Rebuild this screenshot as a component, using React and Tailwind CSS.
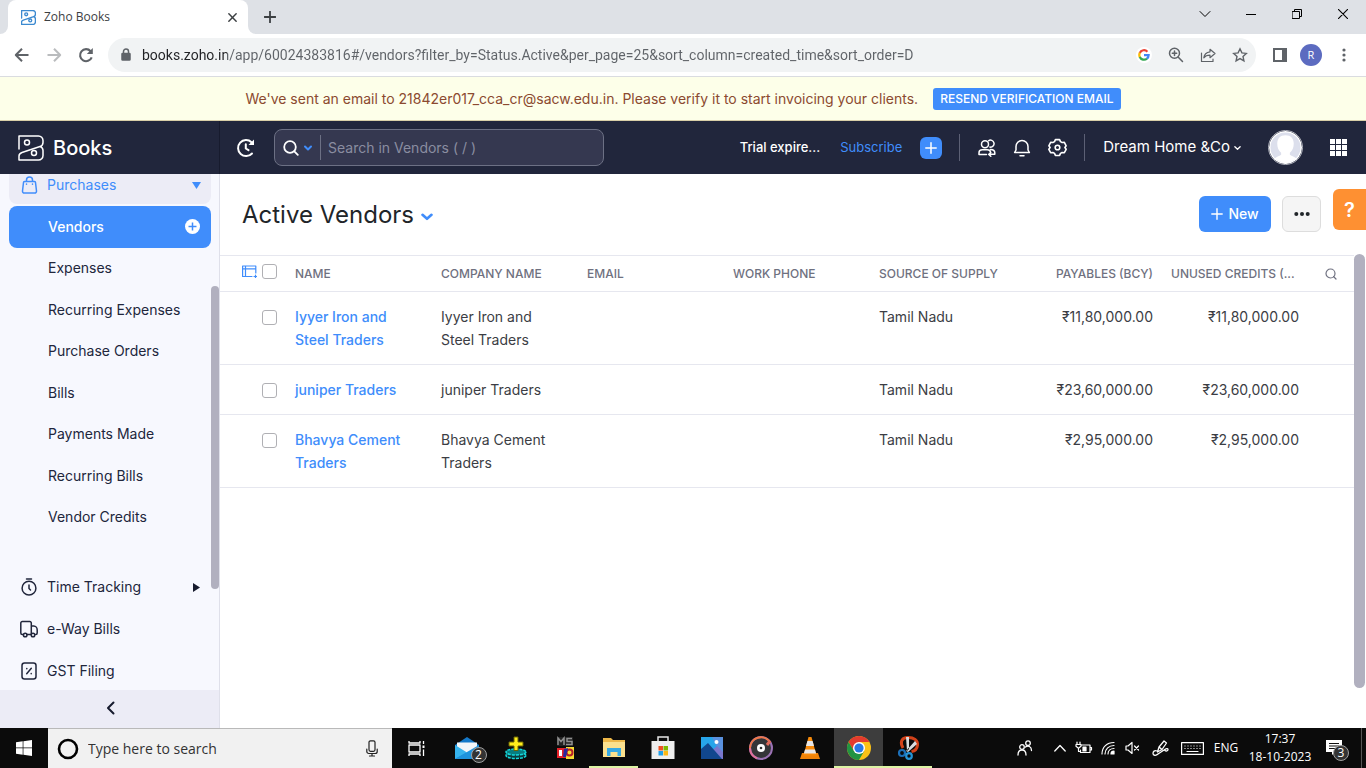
import React from "react";

const UI = "font-['Open_Sans','Noto_Sans',sans-serif]";

function Svg({ s = 24, w, h, sw = 2, className = "", children, vb }) {
  return (
    <svg
      aria-hidden="true"
      width={w || s}
      height={h || s}
      viewBox={vb || "0 0 24 24"}
      fill="none"
      stroke="currentColor"
      strokeWidth={sw}
      strokeLinecap="round"
      strokeLinejoin="round"
      className={"shrink-0 " + className}
    >
      {children}
    </svg>
  );
}

function BooksLogo({ s, sw, className }) {
  return (
    <Svg s={s} sw={sw} vb="0 0 26 26" className={className}>
      <path d="M1 14V1h19.500a4.500 4.500 0 0 1 4.500 4.500v2c0 2-1 3.300-3 4L4 17.500c-2 .7-3 2-3 3.500v4h19.500a4.500 4.500 0 0 0 4.500-4.500v-5c0-1.800-1-3.200-2.800-4" />
      <circle cx="9" cy="7.500" r="2.500" />
      <circle cx="16" cy="18" r="2.500" />
    </Svg>
  );
}

function IconButton({ label, className = "", children }) {
  return (
    <button type="button" aria-label={label} className={"flex shrink-0 items-center justify-center " + className}>
      {children}
    </button>
  );
}

function TabStrip() {
  return (
    <div className={"flex h-[34px] shrink-0 items-stretch bg-[#dee1e6] " + UI}>
      <div className="w-2 bg-white">
        <div className="h-full rounded-br-lg bg-[#dee1e6]" />
      </div>
      <div className="flex w-60 items-center rounded-t-lg bg-white pl-[13px] pr-2">
        <BooksLogo s={15} sw={2.4} className="text-[#3c8ad0]" />
        <span className="ml-2 flex-1 text-xs text-[#3c4043]">Zoho Books</span>
        <IconButton label="Close tab" className="size-4 text-[#3c4043]">
          <Svg s={11} sw={3.2}><path d="M4 4l16 16M20 4L4 20" /></Svg>
        </IconButton>
      </div>
      <div className="w-2 bg-white">
        <div className="h-full rounded-bl-lg bg-[#dee1e6]" />
      </div>
      <IconButton label="New tab" className="w-7 text-[#3c4043]">
        <Svg s={12} sw={3.6} vb="0 0 24 24"><path d="M12 1v22M1 12h22" /></Svg>
      </IconButton>
      <div className="ml-auto flex h-7 text-black">
        <IconButton label="Search tabs" className="w-[46px]">
          <Svg s={12} sw={1} vb="0 0 12 12"><path d="M1 3.500l5 5 5-5" /></Svg>
        </IconButton>
        <IconButton label="Minimise" className="w-[46px]">
          <Svg s={10} sw={1} vb="0 0 10 10"><path d="M0 5.500h10" /></Svg>
        </IconButton>
        <IconButton label="Restore" className="w-[46px]">
          <Svg s={10} sw={1} vb="0 0 10 10"><path d="M.5 2.500h7v7h-7zM2.500 2.500v-2h7v7h-2" /></Svg>
        </IconButton>
        <IconButton label="Close" className="w-[46px]">
          <Svg s={10} sw={1.100} vb="0 0 10 10"><path d="M0 0l10 10M10 0L0 10" /></Svg>
        </IconButton>
      </div>
    </div>
  );
}

function Toolbar() {
  return (
    <div className={"flex h-[43px] shrink-0 items-center border-b border-[#dadce0] bg-white text-[#5f6368] " + UI}>
      <IconButton label="Back" className="ml-3 w-5">
        <Svg s={16} sw={2} vb="0 0 16 16"><path d="M14.500 8H2M8 1.800L1.800 8 8 14.200" strokeLinecap="butt" /></Svg>
      </IconButton>
      <IconButton label="Forward" className="ml-3 w-5 text-[#babcbe]">
        <Svg s={16} sw={2} vb="0 0 16 16"><path d="M1.500 8H14M8 1.800L14.200 8 8 14.200" strokeLinecap="butt" /></Svg>
      </IconButton>
      <IconButton label="Reload" className="ml-3 w-5">
        <Svg s={16} sw={2.100} vb="0 0 16 16">
          <path d="M13.700 10.300A6 6 0 1 1 12.600 4.200" strokeLinecap="butt" />
          <path d="M14.800 1v6h-6z" fill="currentColor" stroke="none" />
        </Svg>
      </IconButton>
      <div className="ml-3 flex h-[34px] min-w-0 flex-1 items-center rounded-full bg-[#f1f3f4] pl-3">
        <Svg s={12} sw={1.500} vb="0 0 12 14" h={14} className="text-[#5f6368]">
          <path d="M3.500 6V3.500a2.500 2.500 0 0 1 5 0V6" />
          <rect x="2" y="5.500" width="8" height="6.500" rx=".6" fill="currentColor" />
        </Svg>
        <input
          aria-label="Address"
          readOnly
          value="books.zoho.in/app/60024383816#/vendors?filter_by=Status.Active&per_page=25&sort_column=created_time&sort_order=D"
          className="ml-2.5 min-w-0 flex-1 bg-[linear-gradient(to_right,#202124_85px,#5f6368_85px)] bg-clip-text font-['Roboto',sans-serif] text-sm text-transparent outline-none"
        />
        <div className="flex items-center">
          <IconButton label="Google" className="size-8">
            <span className="flex size-4 items-center justify-center rounded-full bg-white">
              <Svg s={12} sw={4.500} vb="0 0 24 24">
                <g strokeLinecap="butt" strokeLinejoin="miter">
                  <path d="M3.500 8A9.300 9.300 0 0 1 18.800 5.300" stroke="#ea4335" />
                  <path d="M3.700 16.300a9.300 9.300 0 0 1 0-8.600" stroke="#fbbc05" />
                  <path d="M18 19.200A9.300 9.300 0 0 1 3.500 16" stroke="#34a853" />
                  <path d="M12 12h9.300c0 3-1.300 5.500-3.500 7.300" stroke="#4285f4" />
                </g>
              </Svg>
            </span>
          </IconButton>
          <IconButton label="Zoom" className="size-8">
            <Svg s={16} sw={1.500} vb="0 0 16 16"><circle cx="6.500" cy="6.300" r="5" /><path d="M10.300 10.200l4.200 4.300M4.300 6.300h4.400M6.500 4.100v4.400" /></Svg>
          </IconButton>
          <IconButton label="Share" className="size-8">
            <Svg s={16} sw={1.200} vb="0 0 16 16"><path d="M1.500 6v8.500h11.500v-2.500" /><path d="M10 2.300l5 4.200-5 4.200V8.200c-3 0-4.800.8-6.200 2.600.4-3.300 2.500-5.600 6.200-6z" /></Svg>
          </IconButton>
          <IconButton label="Bookmark" className="size-8">
            <Svg s={16} sw={1.400} vb="0 0 16 16"><path d="M8 1.800l1.900 4.100 4.400.5-3.300 3 .9 4.400L8 11.600l-3.900 2.200.9-4.400-3.300-3 4.400-.5z" strokeLinejoin="miter" /></Svg>
          </IconButton>
        </div>
      </div>
      <IconButton label="Side panel" className="ml-4 w-4">
        <svg width="14" height="14" viewBox="0 0 14 14" aria-hidden="true"><path fill="#5f6368" fillRule="evenodd" d="M0 0h14v14H0zM2 2v10h7V2z" /></svg>
      </IconButton>
      <button type="button" aria-label="Profile" className="ml-3 flex size-[22px] items-center justify-center rounded-full bg-[#5c6bc0] text-[11px] text-white">R</button>
      <IconButton label="Menu" className="mx-3 w-5">
        <svg width="4" height="14" viewBox="0 0 4 14" fill="#5f6368" aria-hidden="true"><circle cx="2" cy="2" r="1.600" /><circle cx="2" cy="7" r="1.600" /><circle cx="2" cy="12" r="1.600" /></svg>
      </IconButton>
    </div>
  );
}

function Banner() {
  return (
    <div className="flex h-11 shrink-0 items-center justify-center gap-[15px] border-b border-[#d8cfa8] bg-[#fdffe9] text-[#8b4a30]">
      <p className="text-sm">We've sent an email to 21842er017_cca_cr@sacw.edu.in. Please verify it to start invoicing your clients.</p>
      <button type="button" className="h-[22px] rounded-[3px] bg-[#408dfb] px-[7px] text-xs font-medium text-white">RESEND VERIFICATION EMAIL</button>
    </div>
  );
}

function AppHeader() {
  return (
    <header className="flex h-[53px] shrink-0 items-center bg-[#21263c] text-white">
      <a href="#home" className="flex h-full w-[220px] shrink-0 items-center border-r border-[#171b2e] pl-[18px]">
        <BooksLogo s={26} sw={1.500} className="text-white" />
        <span className="ml-[9px] text-xl font-medium">Books</span>
      </a>
      <IconButton label="Recent activity" className="ml-4 w-5">
        <Svg s={20} sw={2} vb="0 0 20 20">
          <path d="M16 15.500A8 8 0 1 1 15.500 4.200" />
          <path d="M18 1.500v5.500h-5.500z" fill="currentColor" stroke="none" />
          <path d="M9.800 6.300v4.200l2.700 1.700" />
        </Svg>
      </IconButton>
      <div className="ml-[18px] flex h-[37px] w-[330px] items-center rounded-lg border border-[#6c7084] bg-[#353850] pl-2">
        <Svg s={16} sw={1.800} vb="0 0 16 16"><circle cx="7" cy="7" r="5.800" /><path d="M11.300 11.300l3.500 3.500" /></Svg>
        <Svg s={8} sw={2} vb="0 0 8 6" h={6} className="ml-[5px] text-[#408dfb]"><path d="M1 1.500l3 3 3-3" /></Svg>
        <div className="ml-2 h-[25px] w-px bg-[#6c7084]" />
        <input aria-label="Search in Vendors" placeholder="Search in Vendors ( / )" className="ml-[7px] min-w-0 flex-1 bg-transparent text-sm text-white outline-none placeholder:text-[#8a8da0]" />
      </div>
      <div className="ml-auto flex items-center pr-[19px]">
        <span className="text-[13px] font-medium">Trial expire...</span>
        <a href="#subscribe" className="ml-5 text-[13px] text-[#408dfb]">Subscribe</a>
        <IconButton label="Quick create" className="ml-[18px] size-[22px] rounded-md bg-[#408dfb]">
          <Svg s={12} sw={1.500} vb="0 0 12 12"><path d="M6 .8v10.400M.8 6h10.400" /></Svg>
        </IconButton>
        <div className="ml-[17px] h-[27px] w-px bg-[#5c6075]" />
        <IconButton label="Referrals" className="ml-[17px] w-[20px]">
          <Svg s={18} sw={1.500} vb="0 0 18 18">
            <circle cx="7" cy="5.300" r="3.500" />
            <path d="M10.500 1.800a3.500 3.500 0 1 1 1.500 6.300M1 15.500v-1.700c0-1.800 1.500-3 3.300-3h5c1.800 0 3 1 3.300 2.500M1 15.500h7.500M12.500 10.500c2.500 0 4.300 1.300 4.300 3.300v1.500H11M12.800 13.500l-2 1.900 2 1.900" />
          </Svg>
        </IconButton>
        <IconButton label="Notifications" className="ml-[15px] w-5">
          <Svg s={18} sw={1.500} vb="0 0 18 18"><path d="M3 11V7.500a6 6 0 0 1 12 0V11l1.400 2.500H1.600zM7 16.800h4" /></Svg>
        </IconButton>
        <IconButton label="Settings" className="ml-[15px] w-5">
          <Svg s={19} sw={1.500} vb="0 0 18 18">
            <path d="M7 1.500h4l.8 1.900 1.600.9 2.100-.2 1.700 3.300L16 9l1.200 1.700-1.700 3.200-2.100-.2-1.600.9-.8 1.900H7l-.8-1.900-1.600-.9-2.100.2L.8 10.700 2 9 .8 7.400l1.700-3.300 2.100.2 1.600-.9z" />
            <circle cx="9" cy="9" r="2.200" />
          </Svg>
        </IconButton>
        <div className="ml-[17px] h-[27px] w-px bg-[#5c6075]" />
        <button type="button" className="ml-[18px] flex items-center gap-1 text-[15px]">
          Dream Home &amp;Co
          <Svg s={7} sw={1.500} vb="0 0 8 6" h={6}><path d="M1 1.500l3 3 3-3" /></Svg>
        </button>
        <button type="button" aria-label="Account" className="ml-[27px] size-[35px] overflow-hidden rounded-full border border-[#aeb0ba]">
          <svg viewBox="0 0 34 34" className="size-full" aria-hidden="true">
            <circle cx="17" cy="17" r="17" fill="#fff" />
            <circle cx="17" cy="17" r="15.500" fill="#dcdfec" />
            <path fill="#fff" d="M17 4.500c5.500 0 8.500 3.500 8.500 8.500 0 4.500-1.500 7.500-4 9.500v2c2 1.500 5 2 7 4L17 34 5.500 28.500c2-2 5-2.500 7-4v-2c-2.500-2-4-5-4-9.500 0-5 3-8.500 8.500-8.500z" />
          </svg>
        </button>
        <IconButton label="All apps" className="ml-[26px] w-[18px]">
          <svg width="17" height="17" viewBox="0 0 17 17" fill="#fff" aria-hidden="true">
            {[0, 6, 12].map((y) => [0, 6, 12].map((x) => <rect key={x + "-" + y} x={x} y={y} width="5" height="5" />))}
          </svg>
        </IconButton>
      </div>
    </header>
  );
}

const purchases = ["Expenses", "Recurring Expenses", "Purchase Orders", "Bills", "Payments Made", "Recurring Bills", "Vendor Credits"];

function Sidebar() {
  return (
    <nav className="relative flex w-[220px] shrink-0 flex-col border-r border-[#dfe0ea] bg-[#f7f8fe] text-sm text-[#21263c]">
      <div className="min-h-0 flex-1 overflow-hidden">
        <a href="#purchases" className="mx-[9px] mr-2 flex h-[30px] items-center rounded-b-lg bg-[#ececf6] pb-2 pl-3 pr-2.5 text-[#408dfb]">
          <Svg s={17} sw={1.500} vb="0 0 17 18" h={18}>
            <path d="M3.500 5.500h10a1 1 0 0 1 1 1l1 8.500a1.800 1.800 0 0 1-1.800 2H3.300a1.800 1.800 0 0 1-1.800-2l1-8.500a1 1 0 0 1 1-1zM5.500 5.300V4a3 3 0 0 1 6 0v1.300M5.500 8v.2M11.500 8v.2" />
          </Svg>
          <span className="ml-[9px] flex-1">Purchases</span>
          <svg width="9" height="7" viewBox="0 0 9 7" fill="#408dfb" aria-hidden="true"><path d="M0 0h9L4.500 7z" /></svg>
        </a>
        <ul className="mt-0.5 flex h-[332px] flex-col">
          <li className="ml-[9px] mr-2 flex flex-1 items-center rounded-lg bg-[#408dfb] pl-[39px] pr-[11px] text-white">
            <a href="#vendors" aria-current="page" className="flex-1 font-medium">Vendors</a>
            <IconButton label="New vendor" className="size-[15px]">
              <svg width="15" height="15" viewBox="0 0 15 15" aria-hidden="true"><circle cx="7.500" cy="7.500" r="7.500" fill="#fff" /><path d="M7.500 3.500v8M3.500 7.500h8" stroke="#408dfb" strokeWidth="1.500" /></svg>
            </IconButton>
          </li>
          {purchases.map((p) => (
            <li key={p} className="flex flex-1 items-center pl-12">
              <a href={"#" + p}>{p}</a>
            </li>
          ))}
        </ul>
        <ul className="mt-7 flex flex-col">
          <li className="h-[42px]">
            <a href="#time" className="flex h-full items-center pl-5 pr-[19px]">
              <Svg s={18} sw={1.500} vb="0 0 18 18"><circle cx="9" cy="10.200" r="6.900" /><path d="M6.500 1h5M9 7v3.500l1.500 1.500" /></Svg>
              <span className="ml-[9px] flex-1">Time Tracking</span>
              <svg width="7" height="9" viewBox="0 0 7 9" fill="#171b2e" aria-hidden="true"><path d="M0 0v9l7-4.500z" /></svg>
            </a>
          </li>
          <li className="h-[42px]">
            <a href="#eway" className="flex h-full items-center pl-5">
              <Svg s={18} sw={1.500} vb="0 0 18 18"><path d="M3.500 14.500H2.300A1.500 1.500 0 0 1 .8 13V3A1.500 1.500 0 0 1 2.300 1.500h7.500A1.500 1.500 0 0 1 11.300 3v11.500H6.800M11.300 6h2.500c2 0 3.400 2 3.400 4v3c0 .8-.6 1.500-1.500 1.500" /><circle cx="5.200" cy="15" r="1.800" /><circle cx="13" cy="15" r="1.800" /></Svg>
              <span className="ml-[9px]">e-Way Bills</span>
            </a>
          </li>
          <li className="h-[42px]">
            <a href="#gst" className="flex h-full items-center pl-5">
              <Svg s={18} sw={1.500} vb="0 0 18 18"><rect x="2" y="1" width="14" height="16" rx="2.500" /><path d="M11.300 6.300l-4.600 5.400M6.800 6.500v.2M11.200 11.500v.2" /></Svg>
              <span className="ml-[9px]">GST Filing</span>
            </a>
          </li>
        </ul>
      </div>
      <IconButton label="Collapse sidebar" className="h-[38px] w-full bg-[#ececf6] pb-[3px] pl-0.5 text-[#171b2e]">
        <Svg s={14} sw={2} vb="0 0 14 14"><path d="M9.500 1.500L4 7l5.500 5.500" /></Svg>
      </IconButton>
      <div className="absolute right-0 top-28 h-[303px] w-2 rounded-full bg-[#b1b0bf]" />
    </nav>
  );
}

const vendors = [
  ["Iyyer Iron and Steel Traders", "₹11,80,000.00"],
  ["juniper Traders", "₹23,60,000.00"],
  ["Bhavya Cement Traders", "₹2,95,000.00"],
];

const CHECK = "block size-[15px] appearance-none rounded-[3px] border border-[#b0b0b4] bg-white";
const TD = "py-[13px] pl-2.5 pr-4 align-top";
const TDR = "py-[13px] pl-2.5 pr-2 text-right align-top";
const TH = "truncate pl-2.5 pr-2 font-medium";

function Main() {
  return (
    <main className="relative flex min-w-0 flex-1 flex-col bg-white">
      <div className="flex h-[81px] shrink-0 items-center pl-[22px] pr-[45px]">
        <h1>
          <button type="button" className="flex items-center gap-[7px] text-2xl text-[#212529]">
            Active Vendors
            <Svg s={12} sw={2.600} vb="0 0 12 8" h={8} className="mt-1 text-[#408dfb]"><path d="M1.500 1.800l4.500 4 4.500-4" /></Svg>
          </button>
        </h1>
        <div className="ml-auto flex gap-[11px] pb-0.5">
          <button type="button" className="flex h-9 w-[72px] items-center justify-center gap-[5px] rounded-md bg-[#408dfb] text-sm font-medium text-white">
            <Svg s={12} sw={1.400} vb="0 0 12 12"><path d="M6 .8v10.400M.8 6h10.400" /></Svg>
            New
          </button>
          <IconButton label="More" className="h-9 w-[39px] rounded-md border border-[#ddd] bg-[#f5f5f5]">
            <svg width="16" height="4" viewBox="0 0 16 4" fill="#212529" aria-hidden="true"><circle cx="2.300" cy="2" r="2" /><circle cx="8" cy="2" r="2" /><circle cx="13.700" cy="2" r="2" /></svg>
          </IconButton>
        </div>
      </div>
      <div className="pr-3">
        <table className="w-full table-fixed border-t border-[#e6e7ef] text-left text-sm leading-[23px] text-[#3b3d44]">
          <colgroup>
            <col className="w-[65px]" />
            <col /><col /><col /><col /><col /><col /><col />
            <col className="w-[47px]" />
          </colgroup>
          <thead>
            <tr className="h-9 border-b border-[#e6e7ef] text-xs text-[#6f7180]">
              <th className="pl-[22px]">
                <div className="flex items-center gap-[5px] pb-1">
                  <IconButton label="Customise columns" className="text-[#408dfb]">
                    <Svg s={15} sw={1.200} vb="0 0 15 13" h={13}><path d="M10 11.500H.6V1h13.200v7M.6 3.800h13.200M3.500 1v10.500M13.500 10v3M12 11.500h3" /></Svg>
                  </IconButton>
                  <input type="checkbox" aria-label="Select all vendors" className={CHECK} />
                </div>
              </th>
              <th className={TH}>NAME</th>
              <th className={TH}>COMPANY NAME</th>
              <th className={TH}>EMAIL</th>
              <th className={TH}>WORK PHONE</th>
              <th className={TH}>SOURCE OF SUPPLY</th>
              <th className={TH + " text-right"}>PAYABLES (BCY)</th>
              <th className={TH}>UNUSED CREDITS (...</th>
              <th className="pl-[18px]">
                <IconButton label="Search vendors" className="text-[#6f7180]">
                  <Svg s={12} sw={1.200} vb="0 0 12 12"><circle cx="5.500" cy="5.500" r="4.500" /><path d="M8.500 8.500l2.500 2.500" /></Svg>
                </IconButton>
              </th>
            </tr>
          </thead>
          <tbody>
            {vendors.map(([name, amt]) => (
              <tr key={name} className="border-b border-[#e6e7ef]">
                <td className="pl-[42px] pt-[18px] align-top"><input type="checkbox" aria-label={"Select " + name} className={CHECK} /></td>
                <td className={TD}><a href="#vendor" className="font-medium text-[#408dfb]">{name}</a></td>
                <td className={TD}>{name}</td>
                <td className={TD} />
                <td className={TD} />
                <td className={TD}>Tamil Nadu</td>
                <td className={TDR}>{amt}</td>
                <td className={TDR}>{amt}</td>
                <td />
              </tr>
            ))}
          </tbody>
        </table>
      </div>
      <div className="absolute bottom-10 right-px top-20 w-[11px] rounded-full bg-[#b1b0bf]" />
      <button type="button" aria-label="Help" className="absolute right-0 top-[15px] h-[41px] w-[33px] rounded-l-md bg-[#fe9032] text-xl font-semibold text-white">?</button>
    </main>
  );
}

function TaskApp({ label, className = "", children }) {
  return (
    <button type="button" aria-label={label} className={"flex h-full w-[49px] shrink-0 flex-col items-center justify-center " + className}>
      {children}
    </button>
  );
}

function Pic({ children }) {
  return <svg width="26" height="26" viewBox="0 0 26 26" aria-hidden="true">{children}</svg>;
}

function Taskbar() {
  return (
    <footer className={"flex h-10 shrink-0 items-stretch bg-[#0b0b0b] text-white " + UI}>
      <IconButton label="Start" className="w-12">
        <svg width="16" height="16" viewBox="0 0 16 16" fill="#fff" aria-hidden="true"><path d="M0 2.300l6.700-1v6.300H0zM7.400 1.200L16 0v7.600H7.400zM0 8.300h6.700v6.400L0 13.700zM7.400 8.300H16V16l-8.600-1.200z" /></svg>
      </IconButton>
      <label className="flex w-[344px] items-center border-t border-[#b9b9b9] bg-[#f1f1f1] pl-[9px] pr-[14px] text-[#222]">
        <svg width="22" height="22" viewBox="0 0 22 22" fill="none" aria-hidden="true"><circle cx="11" cy="11" r="9" stroke="#000" strokeWidth="2.600" /></svg>
        <input aria-label="Type here to search" placeholder="Type here to search" className="ml-[9px] min-w-0 flex-1 bg-transparent text-sm outline-none placeholder:text-[#333]" />
        <Svg w={12} h={17} sw={1.200} vb="0 0 12 17"><rect x="3" y=".8" width="6" height="10.500" rx="1.500" /><path d="M.8 9v2.500a2 2 0 0 0 2 2h6.400a2 2 0 0 0 2-2V9M6 13.500V16M3.500 16h5" /></Svg>
      </label>
      <TaskApp label="Task view">
        <Svg s={17} sw={1.300} vb="0 0 17 17"><path d="M1 1v2h11V1M1 16v-2h11v2M1 5h11v7H1zM15.500 1v3M15.500 9.500V16" strokeLinecap="butt" /><rect x="14.500" y="5.500" width="2" height="2.500" fill="#fff" stroke="none" /></Svg>
      </TaskApp>
      <div className="ml-px flex">
        <TaskApp label="Mail">
          <span className="relative">
            <Pic>
              <path d="M1 10L13 2l12 8v14H1z" fill="#1579c9" /><path d="M3 7.500h20V12l-10 7L3 12z" fill="#f3f6f9" /><path d="M1 10l12 7.500L1 24z" fill="#36b3ee" /><path d="M25 10L1 24h24z" fill="#1d93de" />
            </Pic>
            <span className="absolute -right-[7px] top-3 flex size-4 items-center justify-center rounded-full border border-[#a0a0a0] bg-[#333] text-xs">2</span>
          </span>
        </TaskApp>
        <TaskApp label="Finance">
          <Pic>
            <ellipse cx="13" cy="20.500" rx="10" ry="3" fill="#0b3d40" stroke="#14d8dc" strokeWidth="1.500" strokeDasharray="3 1" /><ellipse cx="13" cy="17" rx="10" ry="3" fill="#087d80" stroke="#14d8dc" strokeWidth="1.500" strokeDasharray="3 1" /><path d="M11 2h4v5h5v4h-5v4.500h-4V11H6V7h5z" fill="#ffee1c" stroke="#6b6405" />
          </Pic>
        </TaskApp>
        <TaskApp label="Graphics tool">
          <Pic>
            <rect x="5" y="2" width="16" height="9" fill="#222" /><path d="M6 10V3l3 3.500L12 3v7M20 3.500h-5v3h5v3h-6" fill="none" stroke="#909090" strokeWidth="1.500" /><rect x="5" y="13" width="9" height="10" fill="#e62129" /><path d="M7 15h3v6H7z" fill="#fff" /><rect x="14" y="12" width="8" height="12" fill="#f7dc33" /><circle cx="17.500" cy="17.500" r="3" fill="none" stroke="#b51e2a" strokeWidth="2" /><path d="M12 14l4-1-2 9h-3z" fill="#2828a0" />
          </Pic>
        </TaskApp>
        <TaskApp label="File Explorer" className="border-b-2 border-[#dcf3a4] pt-0.5">
          <Pic>
            <path d="M2 3h8l2 2h12v17H2z" fill="#eeb849" /><path d="M2 7h22v15H2z" fill="#fbe08d" /><path d="M6 13h14v8h-3.500v-4h-7v4H6z" fill="#37a9e3" />
          </Pic>
        </TaskApp>
        <TaskApp label="Store">
          <Pic>
            <path d="M8 8V2h10v6" fill="none" stroke="#e8e8e8" strokeWidth="1.500" /><path d="M1.500 6h23v18h-23z" fill="#efefef" /><path d="M8.500 11H13v4.500H8.500z" fill="#ee5025" /><path d="M13.500 11H18v4.500h-4.500z" fill="#7fb900" /><path d="M8.500 16H13v4.500H8.500z" fill="#1ea1ec" /><path d="M13.500 16H18v4.500h-4.500z" fill="#fcb714" />
          </Pic>
        </TaskApp>
        <TaskApp label="Photos">
          <Pic>
            <path d="M2 2h22v22H2z" fill="#27a5ea" /><path d="M13 2h11v22z" fill="#5a91de" /><path d="M11 17l7-6 6 6v7H11z" fill="#7a77cd" /><path d="M2 14l7-6 14 16H2z" fill="#11478e" /><circle cx="17.500" cy="7" r="2" fill="#fff" />
          </Pic>
        </TaskApp>
        <TaskApp label="Groove Music">
          <Pic>
            <circle cx="13" cy="13" r="11" fill="#353538" stroke="#9b72b4" strokeWidth="2" /><path d="M2 13A11 11 0 0 1 22 7" fill="none" stroke="#f07846" strokeWidth="2" /><path d="M2 13A11 11 0 0 0 9 23.200" fill="none" stroke="#e1719b" strokeWidth="2" /><path d="M22 6l-3 4" stroke="#df6959" strokeWidth="3" /><circle cx="13" cy="13" r="4" fill="#fff" /><circle cx="13" cy="13" r="1.300" fill="#333" />
          </Pic>
        </TaskApp>
        <TaskApp label="VLC">
          <Pic>
            <path d="M5 18h16l2 6H3z" fill="#ef8207" /><path d="M11.500 2h3l5 18.500h-13z" fill="#f88b0b" /><path d="M10.400 6h5.200l1.400 5H9zM8 14.500h10l1.100 4H6.900z" fill="#e7e7e7" />
          </Pic>
        </TaskApp>
        <TaskApp label="Chrome" className="border-b-2 border-[#dcf3a4] bg-[#3d3d3d] pt-0.5">
          <Pic>
            <circle cx="13" cy="13" r="12" fill="#fbc116" /><path d="M2.600 7A12 12 0 0 1 23.400 7H13L8 16z" fill="#e33b2e" /><path d="M2.600 7A12 12 0 0 0 13 25l5.200-9H8z" fill="#229342" /><circle cx="13" cy="13" r="6" fill="#fff" /><circle cx="13" cy="13" r="4.600" fill="#2878e6" />
          </Pic>
        </TaskApp>
        <TaskApp label="Snipping Tool" className="border-b-2 border-[#dcf3a4] pt-0.5">
          <Pic>
            <path d="M8 13c-3-5-2-10 4-10.500 7-.5 11 3 10.500 7.500-.4 4-2.500 6-6 6.500" fill="none" stroke="#d2421a" strokeWidth="3" /><path d="M11 2h3v12l-2 2zM20 6l-9 10 2 1 9-8z" fill="#d9dde0" /><circle cx="7" cy="18" r="3" fill="none" stroke="#1c6fb7" strokeWidth="2.200" /><circle cx="14" cy="21" r="2.800" fill="none" stroke="#2594d6" strokeWidth="2.200" />
          </Pic>
        </TaskApp>
      </div>
      <div className="ml-auto flex items-center">
        <IconButton label="People" className="w-[46px]">
          <Svg s={16} sw={1.300} vb="0 0 16 16"><circle cx="5" cy="7" r="2.300" /><path d="M1 15c0-3 1.500-5 4-5s4 2 4 5" /><circle cx="11" cy="3.200" r="2.300" /><path d="M8.500 7c2.500-2 6-.5 6 3.500" /></Svg>
        </IconButton>
        <IconButton label="Show hidden icons" className="w-6"><Svg s={12} sw={1.300} vb="0 0 12 12"><path d="M.8 9L6 3.500 11.200 9" /></Svg></IconButton>
        <IconButton label="Battery" className="w-6"><Svg w={18} h={14} sw={1.200} vb="0 0 18 14"><path d="M6.500 4h8.500v7.500H5.500V9M15.200 6.500h1.300V9h-1.300M2 1v2M5 1v2M1 3.500h5v1.800l-2.500 2L1 5.300zM3.500 7.500v3h2" /><path d="M8 6h3v4H8z" fill="#fff" /></Svg></IconButton>
        <IconButton label="Wi-Fi" className="w-6"><Svg s={14} sw={1.200} vb="0 0 14 14"><path d="M1 13C1 6 6 1.500 13 1.500M4 13c0-5 4-8.500 9-8.500M7 13c0-3.500 2.700-5.500 6-5.500" /><path d="M10 13c0-2 1-2.800 3-2.800V13z" fill="#fff" /></Svg></IconButton>
        <IconButton label="Muted" className="w-6"><Svg w={15} h={14} sw={1.200} vb="0 0 15 14"><path d="M1 5h2l4-3.500v11L3 9H1zM9.500 5l4 4M13.500 5l-4 4" /></Svg></IconButton>
        <IconButton label="Pen" className="w-8"><Svg s={17} sw={1.300} vb="0 0 17 17"><path d="M5.500 12L7 7l5-6 2.500 2L10 9.500zM7 7l3 2.500M5 11c-2.500-1-4 .5-4 2.500s3 2.500 5 .5l6-4c2-1.500 4-2 4-.5s-2 2-3 1" /></Svg></IconButton>
        <IconButton label="Touch keyboard" className="w-8"><Svg w={23} h={13} sw={1.200} vb="0 0 23 13"><rect x=".6" y=".6" width="21.800" height="11.800" /><path d="M3.500 4h16M3.500 6.500h16" strokeDasharray="1 2" strokeLinecap="butt" /><path d="M6 9.500h11" /></Svg></IconButton>
        <button type="button" className="w-9 text-xs">ENG</button>
        <button type="button" className="w-[72px] text-xs leading-[18px]">17:37<br />18-10-2023</button>
        <button type="button" aria-label="Notifications" className="relative ml-0.5 flex w-[31px] items-center justify-center">
          <svg width="16" height="16" viewBox="0 0 16 16" aria-hidden="true"><path d="M0 0h16v12H9l-3 3v-3H0z" fill="#fff" /><path d="M3 3.500h10M3 6h10M3 8.500h7" stroke="#111" /></svg>
          <span className="absolute right-0 top-[5px] flex size-4 items-center justify-center rounded-full border border-[#a0a0a0] bg-[#333] text-xs">3</span>
        </button>
        <div className="ml-3 mr-1 h-10 w-px bg-[#555]" />
      </div>
    </footer>
  );
}

export default function App() {
  return (
    <div className="flex h-screen w-full flex-col overflow-hidden bg-white font-['Inter','Liberation_Sans',sans-serif]">
      <TabStrip />
      <Toolbar />
      <Banner />
      <AppHeader />
      <div className="flex min-h-0 flex-1">
        <Sidebar />
        <Main />
      </div>
      <Taskbar />
    </div>
  );
}
